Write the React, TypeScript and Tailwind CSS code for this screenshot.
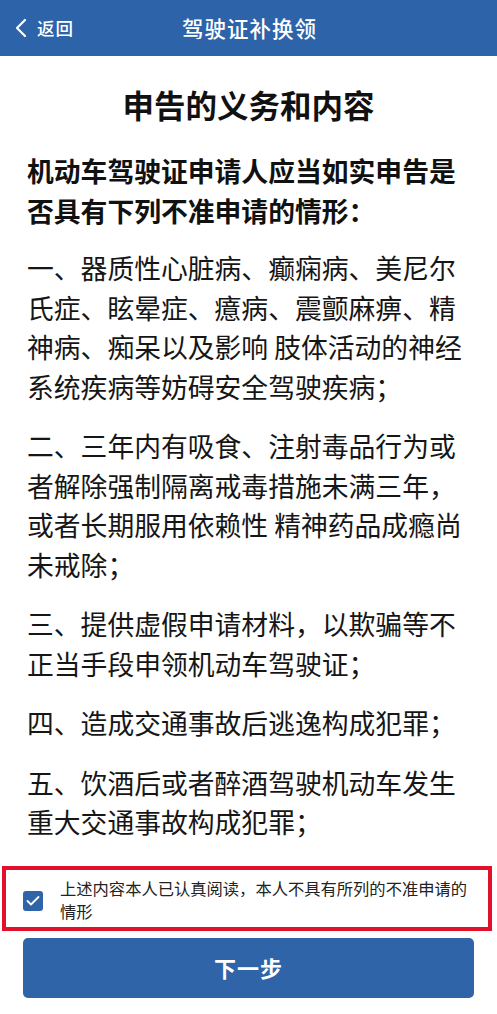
import React from "react";

const para1 = [
  "一、器质性心脏病、癫痫病、美尼尔",
  "氏症、眩晕症、癔病、震颤麻痹、精",
  "神病、痴呆以及影响 肢体活动的神经",
  "系统疾病等妨碍安全驾驶疾病；",
];
const para2 = [
  "二、三年内有吸食、注射毒品行为或",
  "者解除强制隔离戒毒措施未满三年，",
  "或者长期服用依赖性 精神药品成瘾尚",
  "未戒除；",
];
const para3 = ["三、提供虚假申请材料，以欺骗等不", "正当手段申领机动车驾驶证；"];
const para4 = ["四、造成交通事故后逃逸构成犯罪；"];
const para5 = ["五、饮酒后或者醉酒驾驶机动车发生", "重大交通事故构成犯罪；"];

function Para({ lines, first }: { lines: string[]; first?: boolean }) {
  return (
    <div className={first ? "mt-[17px]" : "mt-[20px]"}>
      {lines.map((l, i) => (
        <div key={i} className="whitespace-nowrap text-[26.8px] leading-[39.5px] text-[#161616]">
          {l}
        </div>
      ))}
    </div>
  );
}

export default function App() {
  return (
    <div
      className="w-[497px] min-h-[1014px] bg-white flex flex-col"
      style={{ fontFamily: '"Noto Sans CJK SC", "Noto Sans", sans-serif' }}
    >
      <div className="h-[56px] bg-[#2d63a8] flex items-center relative">
        <div className="flex items-center pl-[14px] gap-[10px] text-white">
          <svg width="13" height="20" viewBox="0 0 13 20" fill="none">
            <polyline points="11,2 3,10 11,18" stroke="white" strokeWidth="2.2" strokeLinecap="round" strokeLinejoin="round" />
          </svg>
          <span className="text-[17.5px] font-medium tracking-[1px]">返回</span>
        </div>
        <div className="absolute inset-0 flex items-center justify-center pointer-events-none">
          <span className="text-white text-[21.5px] font-medium tracking-[1px] ml-[2px]">驾驶证补换领</span>
        </div>
      </div>

      <div className="px-[27px]">
        <div className="mt-[28px] text-center text-[31.5px] font-bold leading-[40px] text-[#111]">
          申告的义务和内容
        </div>
        <div className="mt-[27px]">
          <div className="whitespace-nowrap text-[26.8px] font-bold leading-[40px] text-[#111]">
            机动车驾驶证申请人应当如实申告是
          </div>
          <div className="whitespace-nowrap text-[26.8px] font-bold leading-[40px] text-[#111]">
            否具有下列不准申请的情形：
          </div>
        </div>
        <Para lines={para1} first />
        <Para lines={para2} />
        <Para lines={para3} />
        <Para lines={para4} />
        <Para lines={para5} />
      </div>

      <div className="mt-[24px] ml-[2px] mr-[5px] border-[4px] border-[#e3102b] flex items-center pl-[17px] pr-[6px] pt-[7px] pb-[4px]">
        <div className="w-[20px] h-[20px] rounded-[3px] bg-[#2f64a8] flex items-center justify-center shrink-0 mt-[2px]">
          <svg width="14" height="12" viewBox="0 0 14 12" fill="none">
            <polyline points="1.5,6 5,9.5 12.5,2" stroke="white" strokeWidth="1.8" strokeLinecap="round" strokeLinejoin="round" />
          </svg>
        </div>
        <div className="ml-[17px] text-[16.3px] leading-[23px] text-[#222] whitespace-nowrap">
          上述内容本人已认真阅读，本人不具有所列的不准申请的
          <br />
          情形
        </div>
      </div>

      <div className="mt-[7px] mx-[23px] h-[60px] rounded-[5px] bg-[#2f64a8] flex items-center justify-center">
        <span className="text-white text-[22px] font-bold tracking-[1px]">下一步</span>
      </div>
    </div>
  );
}
